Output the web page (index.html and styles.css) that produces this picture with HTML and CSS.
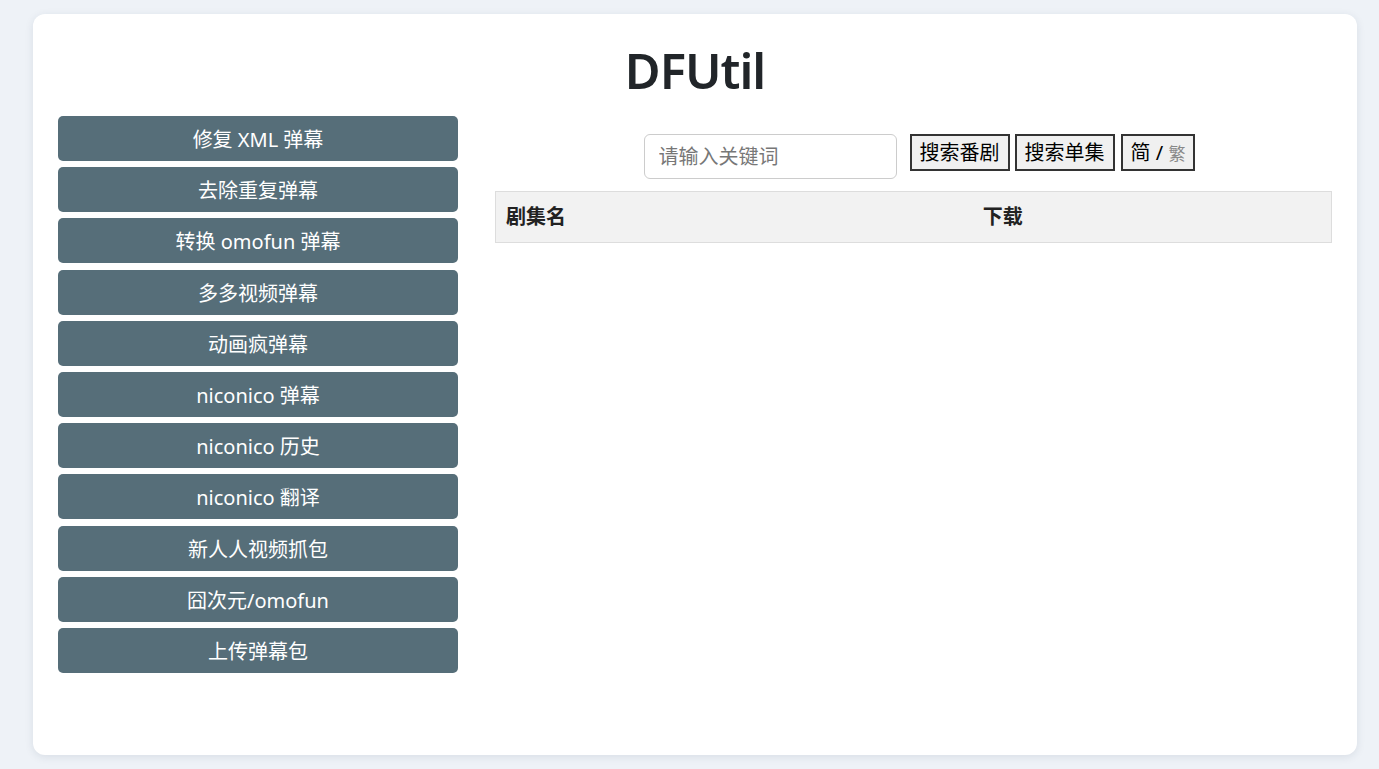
FILE: index.html
```html
<!DOCTYPE html>
<html lang="zh-CN">
<head>
<meta charset="utf-8">
<title>DFUtil</title>
<link rel="stylesheet" href="styles.css">
</head>
<body>
<div class="page">
  <div class="card">
    <h1 class="title">DFUtil</h1>
    <div class="main">
      <nav class="menu">
        <button class="menu-btn">修复 XML 弹幕</button>
        <button class="menu-btn">去除重复弹幕</button>
        <button class="menu-btn">转换 omofun 弹幕</button>
        <button class="menu-btn">多多视频弹幕</button>
        <button class="menu-btn">动画疯弹幕</button>
        <button class="menu-btn">niconico 弹幕</button>
        <button class="menu-btn">niconico 历史</button>
        <button class="menu-btn">niconico 翻译</button>
        <button class="menu-btn">新人人视频抓包</button>
        <button class="menu-btn">囧次元/omofun</button>
        <button class="menu-btn">上传弹幕包</button>
      </nav>
      <section class="content">
        <div class="search-row">
          <input class="search-input" type="text" placeholder="请输入关键词">
          <div class="search-btns">
            <button class="sbtn">搜索番剧</button>
            <button class="sbtn">搜索单集</button>
            <button class="sbtn lang">简 / <span class="trad">繁</span></button>
          </div>
        </div>
        <table class="results">
          <thead>
            <tr><th>剧集名</th><th>下载</th></tr>
          </thead>
          <tbody></tbody>
        </table>
      </section>
    </div>
  </div>
</div>
</body>
</html>
```

FILE: styles.css
```css
* { box-sizing: border-box; }
html, body { margin: 0; padding: 0; }
body {
  background: #eef2f7;
  font-family: "Noto Sans", "Noto Sans CJK SC", sans-serif;
  color: #212529;
}
.page {
  padding: 14px 22px 14px 33px;
}
.card {
  background: #fff;
  border-radius: 12px;
  box-shadow: 0 2px 8px rgba(30, 50, 80, 0.10);
  min-height: 741px;
  padding: 0 25px;
}
.title {
  margin: 0;
  padding-top: 27px;
  font-size: 49px;
  line-height: 59px;
  font-weight: 600;
  text-align: center;
  color: #212529;
  letter-spacing: -1px;
}
.main {
  display: flex;
  gap: 37px;
  margin-top: 16px;
}
.menu {
  width: 400px;
  flex: none;
  display: flex;
  flex-direction: column;
  gap: 6.2px;
}
.menu-btn {
  height: 45px;
  border: none;
  border-radius: 5px;
  background: #566e79;
  color: #fff;
  font-family: "Noto Sans", "Noto Sans CJK SC", sans-serif;
  font-size: 20px;
  padding: 0;
  cursor: pointer;
}
.content {
  flex: 1;
  padding-top: 18px;
}
.search-row {
  display: flex;
  justify-content: center;
  align-items: flex-start;
  padding-left: 12px;
  gap: 13px;
}
.search-input {
  width: 253px;
  height: 45px;
  border: 1px solid #ccc;
  border-radius: 6px;
  padding: 0 14px;
  font-family: "Noto Sans", "Noto Sans CJK SC", sans-serif;
  font-size: 20px;
  color: #333;
}
.search-input::placeholder { color: #777; }
.search-btns {
  display: flex;
  gap: 5px;
}
.sbtn {
  height: 37px;
  border: 2px solid #333;
  background: #f0f0f0;
  color: #000;
  font-family: "Noto Sans", "Noto Sans CJK SC", sans-serif;
  font-size: 20px;
  padding: 0 8px;
  line-height: 1;
}
.lang { padding: 0 8px; margin-left: 1px; }
.trad { font-size: 17px; color: #888; }
.results {
  width: 100%;
  margin-top: 12px;
  border-collapse: collapse;
  border: 1px solid #ddd;
}
.results th {
  background: #f2f2f2;
  text-align: left;
  font-size: 20px;
  font-weight: 700;
  line-height: 26px;
  padding: 12px 10px;
  color: #222;
}
```
